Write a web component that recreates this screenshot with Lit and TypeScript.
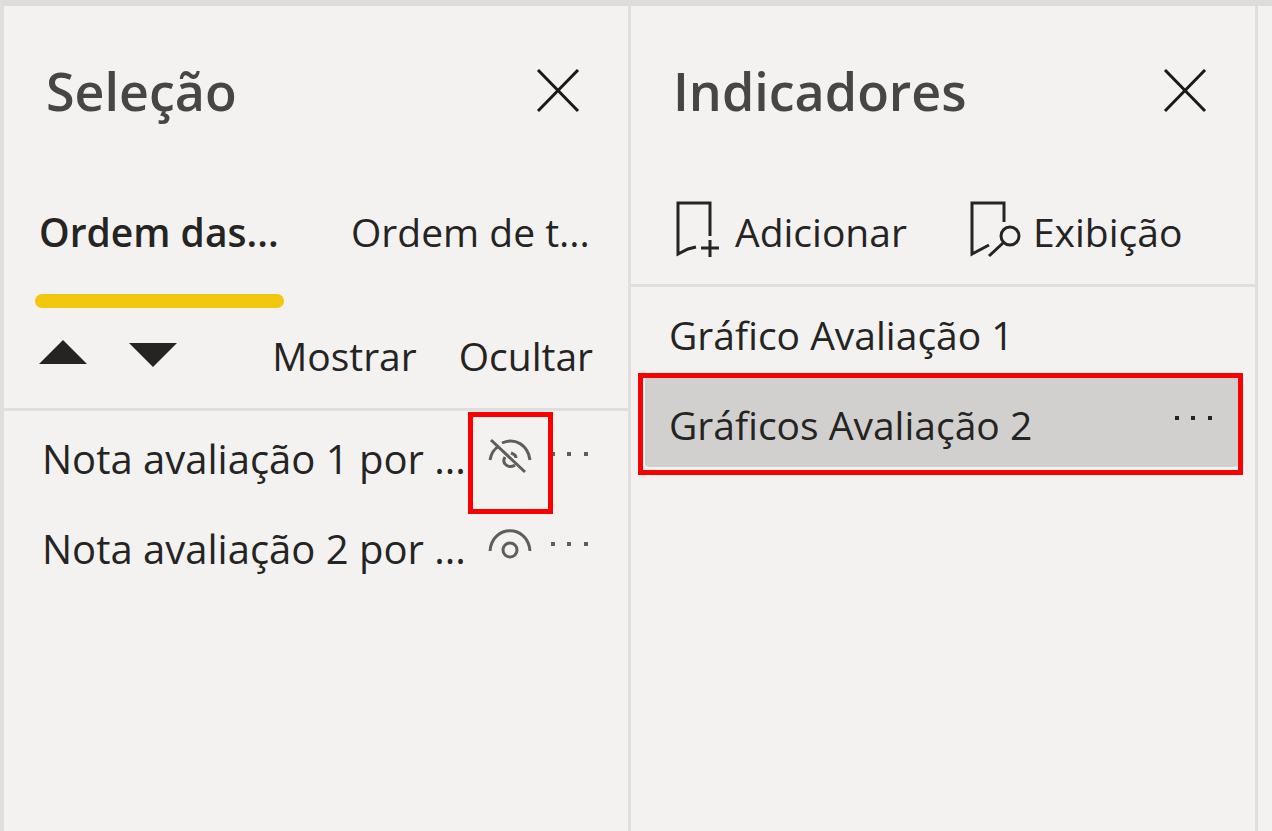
import { LitElement, html, css, svg } from "lit";
import { customElement, property, state } from "lit/decorators.js";

const closeIcon = html`<svg width="44" height="44" viewBox="0 0 44 44" aria-hidden="true">
  <path d="M2 1 42 42M42 1 2 42" fill="none" stroke="currentColor" stroke-width="3" />
</svg>`;

const moreIcon = html`<svg width="44" height="6" viewBox="0 0 44 6" aria-hidden="true">
  <path d="M3 1h4v4h-4zM19 1h4v4h-4zM36 1h4v4h-4z" fill="currentColor" />
</svg>`;

@customElement("pane-header")
export class PaneHeader extends LitElement {
  @property() heading = "";

  static styles = css`
    :host {
      display: flex;
      align-items: center;
      justify-content: space-between;
      height: 170px;
      padding: 0 48px 0 42px;
    }
    .title {
      margin: 0;
      font-size: 52px;
      line-height: 72px;
      font-weight: 600;
      color: #484644;
    }
    .close {
      display: flex;
      border: 0;
      padding: 0;
      background: none;
      color: #1b1a19;
    }
  `;

  render() {
    return html`
      <h2 class="title">${this.heading}</h2>
      <button class="close" aria-label="Fechar">${closeIcon}</button>
    `;
  }
}

@customElement("selection-pane")
export class SelectionPane extends LitElement {
  @state() private layers = [
    { name: "Nota avaliação 1 por ...", hidden: true, marked: true },
    { name: "Nota avaliação 2 por ...", hidden: false, marked: false },
  ];

  static styles = css`
    :host {
      display: block;
    }
    button {
      font: inherit;
      color: inherit;
      border: 0;
      padding: 0;
      background: none;
      text-align: left;
      white-space: nowrap;
    }
    .tabs {
      display: flex;
      gap: 63px;
      padding: 0 32px 0 31px;
    }
    .tab {
      flex: 1;
      min-width: 0;
    }
    .tab-text {
      display: block;
      height: 118px;
      line-height: 112px;
      padding-left: 4px;
    }
    .tab-bar {
      display: block;
      height: 14px;
      border-radius: 7px;
    }
    .active {
      font-weight: 600;
    }
    .active .tab-bar {
      background: #f2c80f;
    }
    .tools {
      display: flex;
      align-items: center;
      height: 94px;
      padding: 0 35px 6px;
      border-bottom: 3px solid #e1dfdd;
    }
    .arrow {
      display: flex;
      margin-right: 42px;
    }
    .text-tools {
      display: flex;
      gap: 42px;
      margin-left: auto;
      padding-top: 2px;
    }
    .layers {
      margin: 0;
      padding: 0;
      list-style: none;
    }
    .layer {
      display: flex;
      align-items: center;
      height: 90px;
      padding: 0 36px 0 38px;
    }
    .name {
      flex: 1;
      padding-top: 6px;
      font-size: 40px;
      white-space: nowrap;
    }
    .eye {
      position: relative;
      display: flex;
      margin-right: 16px;
      color: #605e5c;
    }
    .more {
      display: flex;
      padding-bottom: 4px;
      color: #605e5c;
    }
    .mark {
      position: absolute;
      inset: -25px -21px -39px -20px;
      border: 5px solid #fb0000;
      pointer-events: none;
    }
  `;

  private eye(hidden: boolean) {
    return html`<svg width="44" height="38" viewBox="0 0 44 38" aria-hidden="true">
      <g fill="none" stroke="currentColor" stroke-width="3">
        ${hidden
          ? svg`<path d="M2 23C3 17 6 12 11 9M14 6C27 0 40 8 42 23M3 3 37 35" />
              <path d="M17 20C13 27 21 32 27 28M23 16C26 17 28 19 28 21" />`
          : svg`<path d="M2 24C4 -3 40 -3 42 24" /><circle cx="22" cy="23" r="7" />`}
      </g>
    </svg>`;
  }

  render() {
    return html`
      <pane-header heading="Seleção"></pane-header>
      <div class="tabs" role="tablist">
        <button class="tab active" role="tab" aria-selected="true">
          <span class="tab-text">Ordem das...</span><span class="tab-bar"></span>
        </button>
        <button class="tab" role="tab" aria-selected="false">
          <span class="tab-text">Ordem de t...</span><span class="tab-bar"></span>
        </button>
      </div>
      <div class="tools">
        <button class="arrow" aria-label="Mover para cima">
          <svg width="48" height="30" viewBox="0 0 48 30"><path d="M0 24 24 0 48 24z" fill="currentColor" /></svg>
        </button>
        <button class="arrow" aria-label="Mover para baixo">
          <svg width="48" height="30" viewBox="0 0 48 30"><path d="M0 3 24 27 48 3z" fill="currentColor" /></svg>
        </button>
        <div class="text-tools">
          <button>Mostrar</button>
          <button>Ocultar</button>
        </div>
      </div>
      <ul class="layers">
        ${this.layers.map(
          (l) => html`<li class="layer">
            <span class="name">${l.name}</span>
            <button class="eye" aria-label=${l.hidden ? "Mostrar camada" : "Ocultar camada"}>
              ${this.eye(l.hidden)}${l.marked ? html`<span class="mark"></span>` : ""}
            </button>
            <button class="more" aria-label="Mais opções">${moreIcon}</button>
          </li>`
        )}
      </ul>
    `;
  }
}

@customElement("bookmarks-pane")
export class BookmarksPane extends LitElement {
  @state() private bookmarks = [
    { name: "Gráfico Avaliação 1", selected: false },
    { name: "Gráficos Avaliação 2", selected: true },
  ];

  static styles = css`
    :host {
      display: block;
    }
    button {
      font: inherit;
      color: inherit;
      border: 0;
      padding: 0;
      background: none;
      white-space: nowrap;
    }
    .tools {
      display: flex;
      align-items: center;
      gap: 62px;
      height: 108px;
      padding: 0 44px;
      border-bottom: 3px solid #e1dfdd;
    }
    .tool {
      display: flex;
      align-items: center;
      gap: 16px;
    }
    .tool + .tool {
      gap: 12px;
    }
    .label {
      padding-top: 4px;
    }
    .items {
      margin: 0;
      padding: 0 17px 0 14px;
      list-style: none;
    }
    .item {
      position: relative;
      display: flex;
      align-items: center;
      justify-content: space-between;
      height: 90px;
      padding: 0 22px 0 24px;
      border-radius: 4px;
      white-space: nowrap;
    }
    .name {
      padding-top: 6px;
    }
    .selected {
      background: #d2d0ce;
    }
    .more {
      display: flex;
      padding-bottom: 8px;
    }
    .mark {
      position: absolute;
      inset: -4px -5px -8px -7px;
      border: 5px solid #fb0000;
      pointer-events: none;
    }
  `;

  render() {
    return html`
      <pane-header heading="Indicadores"></pane-header>
      <div class="tools">
        <button class="tool">
          <svg width="44" height="60" viewBox="0 0 44 60" aria-hidden="true">
            <path d="M35 36V3H3V54L13 49 21 47M35 40V57M26 48H44" fill="none" stroke="currentColor" stroke-width="3" />
          </svg>
          <span class="label">Adicionar</span>
        </button>
        <button class="tool">
          <svg width="52" height="60" viewBox="0 0 52 60" aria-hidden="true">
            <path d="M35 22V3H3V54L20 45M20 56 34 43" fill="none" stroke="currentColor" stroke-width="3" />
            <circle cx="41" cy="36" r="9" fill="none" stroke="currentColor" stroke-width="3" />
          </svg>
          <span class="label">Exibição</span>
        </button>
      </div>
      <ul class="items">
        ${this.bookmarks.map(
          (b) => html`<li class="item ${b.selected ? "selected" : ""}">
            <span class="name">${b.name}</span>
            ${b.selected
              ? html`<button class="more" aria-label="Mais opções">${moreIcon}</button><span class="mark"></span>`
              : ""}
          </li>`
        )}
      </ul>
    `;
  }
}

@customElement("app-root")
export class AppRoot extends LitElement {
  static styles = css`
    :host {
      display: flex;
      box-sizing: border-box;
      min-height: 100vh;
      padding-right: 14px;
      border-top: 6px solid #dddcdc;
      border-left: 4px solid #e1dfdd;
      background: #f3f2f1;
      color: #252423;
      font-family: "Open Sans", "Noto Sans", sans-serif;
      font-size: 39px;
      line-height: 56px;
    }
    .pane {
      flex: 1;
      min-width: 0;
      border-right: 3px solid #e1dfdd;
    }
  `;

  render() {
    return html`
      <selection-pane class="pane"></selection-pane>
      <bookmarks-pane class="pane"></bookmarks-pane>
    `;
  }
}
